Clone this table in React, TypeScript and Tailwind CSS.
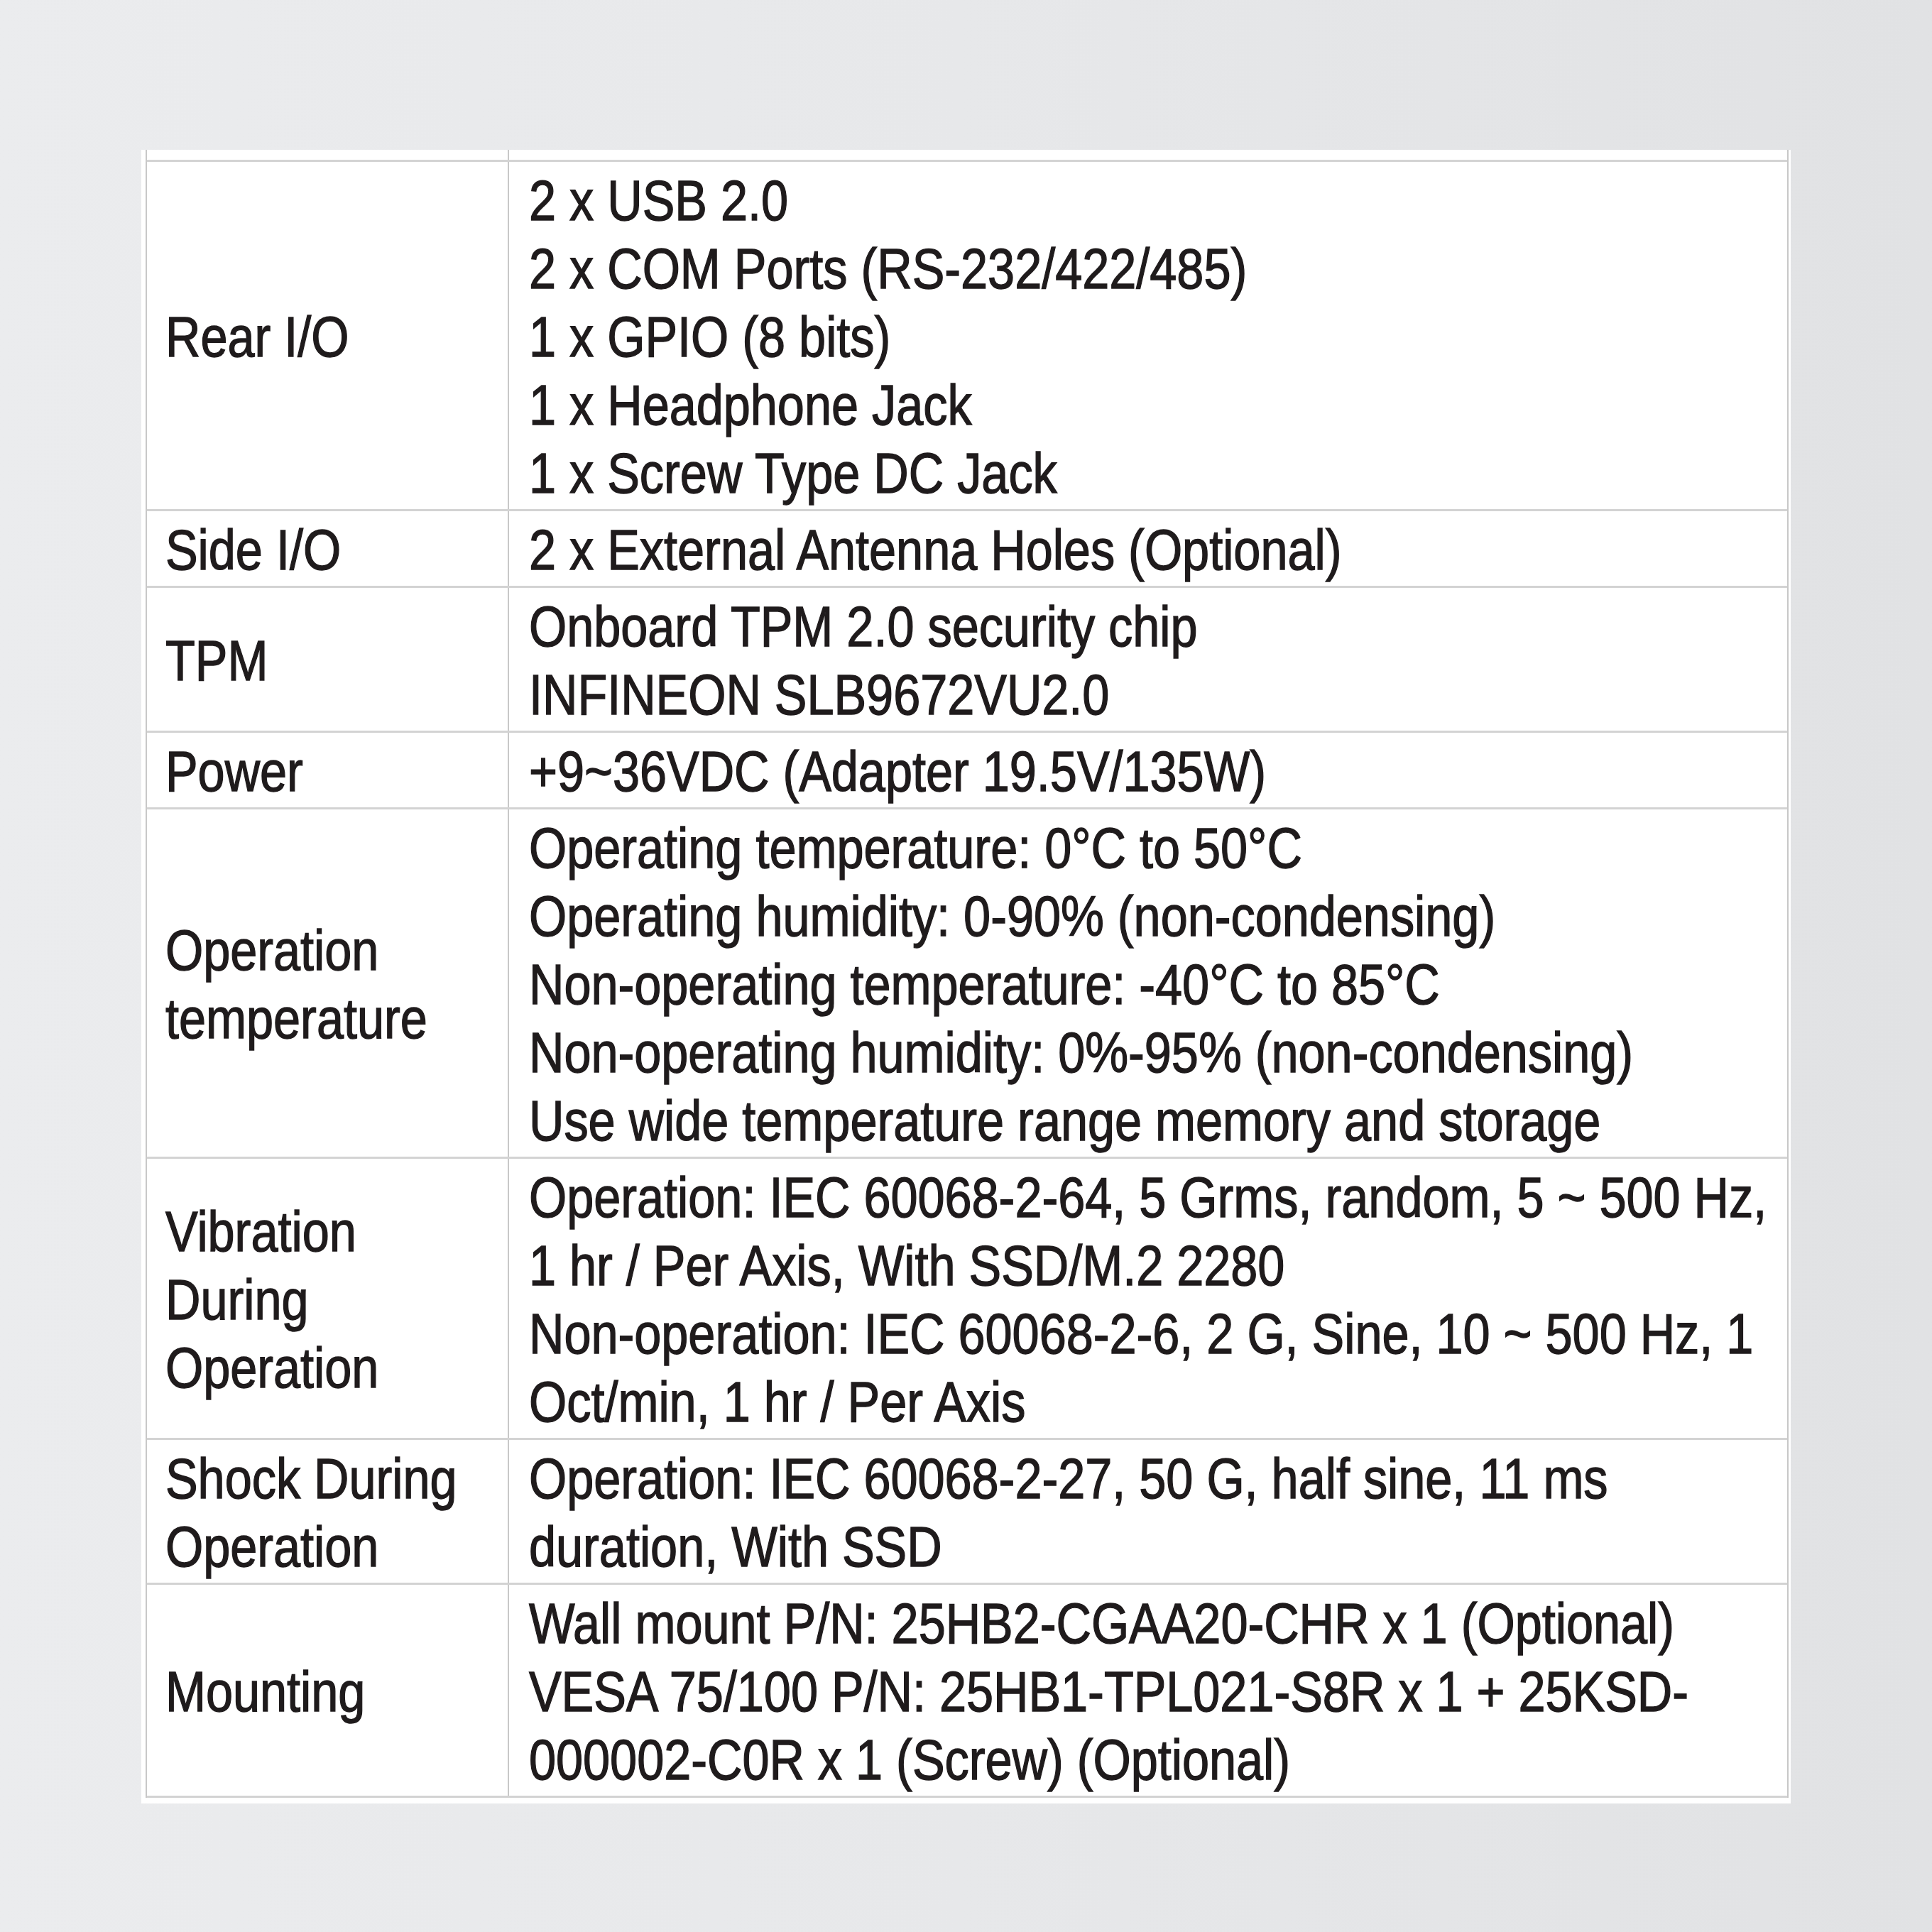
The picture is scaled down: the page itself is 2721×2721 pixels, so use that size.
import React from "react";

type Row = { label: string[]; lines: string[] };

const rows: Row[] = [
  {
    label: ["Rear I/O"],
    lines: [
      "2 x USB 2.0",
      "2 x COM Ports (RS-232/422/485)",
      "1 x GPIO (8 bits)",
      "1 x Headphone Jack",
      "1 x Screw Type DC Jack",
    ],
  },
  { label: ["Side I/O"], lines: ["2 x External Antenna Holes (Optional)"] },
  {
    label: ["TPM"],
    lines: ["Onboard TPM 2.0 security chip", "INFINEON SLB9672VU2.0"],
  },
  { label: ["Power"], lines: ["+9~36VDC (Adapter 19.5V/135W)"] },
  {
    label: ["Operation", "temperature"],
    lines: [
      "Operating temperature: 0°C to 50°C",
      "Operating humidity: 0-90% (non-condensing)",
      "Non-operating temperature: -40°C to 85°C",
      "Non-operating humidity: 0%-95% (non-condensing)",
      "Use wide temperature range memory and storage",
    ],
  },
  {
    label: ["Vibration", "During", "Operation"],
    lines: [
      "Operation: IEC 60068-2-64, 5 Grms, random, 5 ~ 500 Hz,",
      "1 hr / Per Axis, With SSD/M.2 2280",
      "Non-operation: IEC 60068-2-6, 2 G, Sine, 10 ~ 500 Hz, 1",
      "Oct/min, 1 hr / Per Axis",
    ],
  },
  {
    label: ["Shock During", "Operation"],
    lines: [
      "Operation: IEC 60068-2-27, 50 G, half sine, 11 ms",
      "duration, With SSD",
    ],
  },
  {
    label: ["Mounting"],
    lines: [
      "Wall mount P/N: 25HB2-CGAA20-CHR x 1 (Optional)",
      "VESA 75/100 P/N: 25HB1-TPL021-S8R x 1 + 25KSD-",
      "000002-C0R x 1 (Screw) (Optional)",
    ],
  },
];

// the datasheet face is a condensed grotesque; squeeze Liberation Sans to match
function Line({ text }: { text: string }) {
  return (
    <div className="whitespace-nowrap origin-left scale-x-[0.855]">{text}</div>
  );
}

function SpecRow({ row }: { row: Row }) {
  return (
    <div className="flex border-b-[3px] border-[#d3d3d3]">
      <div className="w-[510px] shrink-0 border-r-2 border-[#c8c8c8] pl-[26px] pt-[7px] pb-[2px] flex flex-col justify-center">
        {row.label.map((l, i) => (
          <Line key={i} text={l} />
        ))}
      </div>
      <div className="flex-1 min-w-0 pl-[28px] pt-[7px] pb-[2px]">
        {row.lines.map((l, i) => (
          <Line key={i} text={l} />
        ))}
      </div>
    </div>
  );
}

export default function App() {
  return (
    <div className="w-[2721px] h-[2721px] overflow-hidden bg-linear-to-r from-[#ebecee] via-[#e7e8ea] to-[#e1e2e4] pt-[211px] pl-[199px] font-['Liberation_Sans',Arial,sans-serif] text-[80px] leading-[96px] text-[#1f1b1c] [-webkit-text-stroke:1.4px_#1f1b1c]">
      <div className="w-[2323px] bg-white pl-[6px] pr-[3px] pb-[8px]">
        <div className="border-x-2 border-[#c8c8c8]">
          {/* cut-off row from the previous page */}
          <div className="flex h-[17px] border-b-[3px] border-[#d3d3d3]">
            <div className="w-[510px] shrink-0 border-r-2 border-[#c8c8c8]" />
          </div>
          {rows.map((row, i) => (
            <SpecRow key={i} row={row} />
          ))}
        </div>
      </div>
    </div>
  );
}
